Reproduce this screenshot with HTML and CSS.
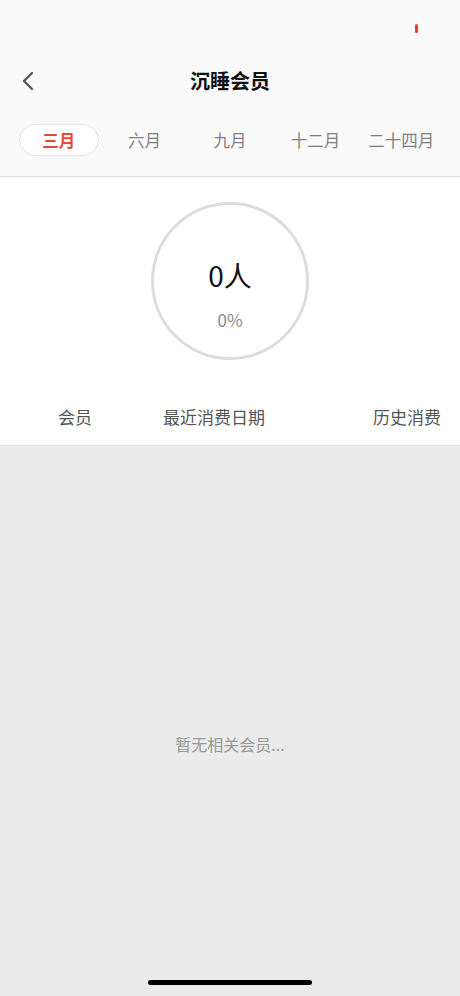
FILE: index.html
```html
<!DOCTYPE html>
<html lang="zh">
<head>
<meta charset="utf-8">
<link rel="stylesheet" href="styles.css">
</head>
<body>
<div class="page">
  <div class="top">
    <div class="status"><span class="rec"></span></div>
    <div class="nav">
      <svg class="back" width="14" height="20" viewBox="0 0 14 20"><path d="M11 2 L3 10 L11 18" fill="none" stroke="#555" stroke-width="2.4" stroke-linecap="round" stroke-linejoin="round"/></svg>
      <div class="title">沉睡会员</div>
    </div>
    <div class="tabs">
      <div class="tab active"><span>三月</span></div>
      <div class="tab"><span>六月</span></div>
      <div class="tab"><span>九月</span></div>
      <div class="tab"><span>十二月</span></div>
      <div class="tab"><span>二十四月</span></div>
    </div>
  </div>
  <div class="summary">
    <div class="ring">
      <div class="count">0人</div>
      <div class="pct">0%</div>
    </div>
    <div class="head">
      <div class="c1">会员</div>
      <div class="c2">最近消费日期</div>
      <div class="c3">历史消费</div>
    </div>
  </div>
  <div class="list">
    <div class="empty">暂无相关会员...</div>
    <div class="home"></div>
  </div>
</div>
</body>
</html>
```
FILE: styles.css
```css
* { box-sizing: border-box; margin: 0; padding: 0; }
html, body { width: 460px; height: 996px; overflow: hidden; }
body { font-family: "Noto Sans CJK SC", "Noto Sans", sans-serif; background: #ebebeb; }
.page { display: flex; flex-direction: column; height: 996px; }
.top { background: #fafafa; border-bottom: 1px solid #dedede; }
.status { height: 44px; position: relative; }
.rec { position: absolute; left: 415px; top: 24px; width: 3px; height: 9px; border-radius: 2px; background: #e8402f; }
.nav { height: 74px; display: flex; align-items: center; justify-content: center; position: relative; }
.back { position: absolute; left: 21px; top: 27px; }
.title { font-size: 20px; font-weight: 700; color: #111; line-height: 26px; }
.tabs { display: flex; padding: 6px 16px 20px; }
.tab { flex: 1; display: flex; justify-content: center; }
.tab span { display: flex; align-items: center; justify-content: center; width: 80px; height: 32px; font-size: 16.5px; color: #808080; border-radius: 16px; border: 1px solid transparent; }
.tab.active span { color: #e5473a; font-weight: 700; background: #fff; border-color: #e2e2e2; }
.summary { background: #fff; border-bottom: 1px solid #dedede; display: flex; flex-direction: column; align-items: center; padding-top: 25px; }
.ring { width: 158px; height: 158px; border-radius: 50%; border: 3px solid #dcdcdc; display: flex; flex-direction: column; align-items: center; justify-content: center; }
.count { font-size: 28px; color: #111; line-height: 36px; margin-top: 26px; }
.pct { font-size: 17px; color: #888; line-height: 22px; margin-top: 16px; }
.head { width: 100%; height: 59px; margin-top: 26px; display: flex; align-items: center; font-size: 17px; color: #555; padding-top: 2px; }
.c1 { width: 150px; text-align: center; }
.c2 { flex: 1; padding-left: 13px; }
.c3 { padding-right: 19px; }
.list { flex: 1; display: flex; flex-direction: column; align-items: center; }
.empty { margin-top: 287px; font-size: 16px; color: #999; line-height: 22px; }
.home { margin-top: auto; margin-bottom: 11px; width: 164px; height: 5px; border-radius: 3px; background: #000; }
```
